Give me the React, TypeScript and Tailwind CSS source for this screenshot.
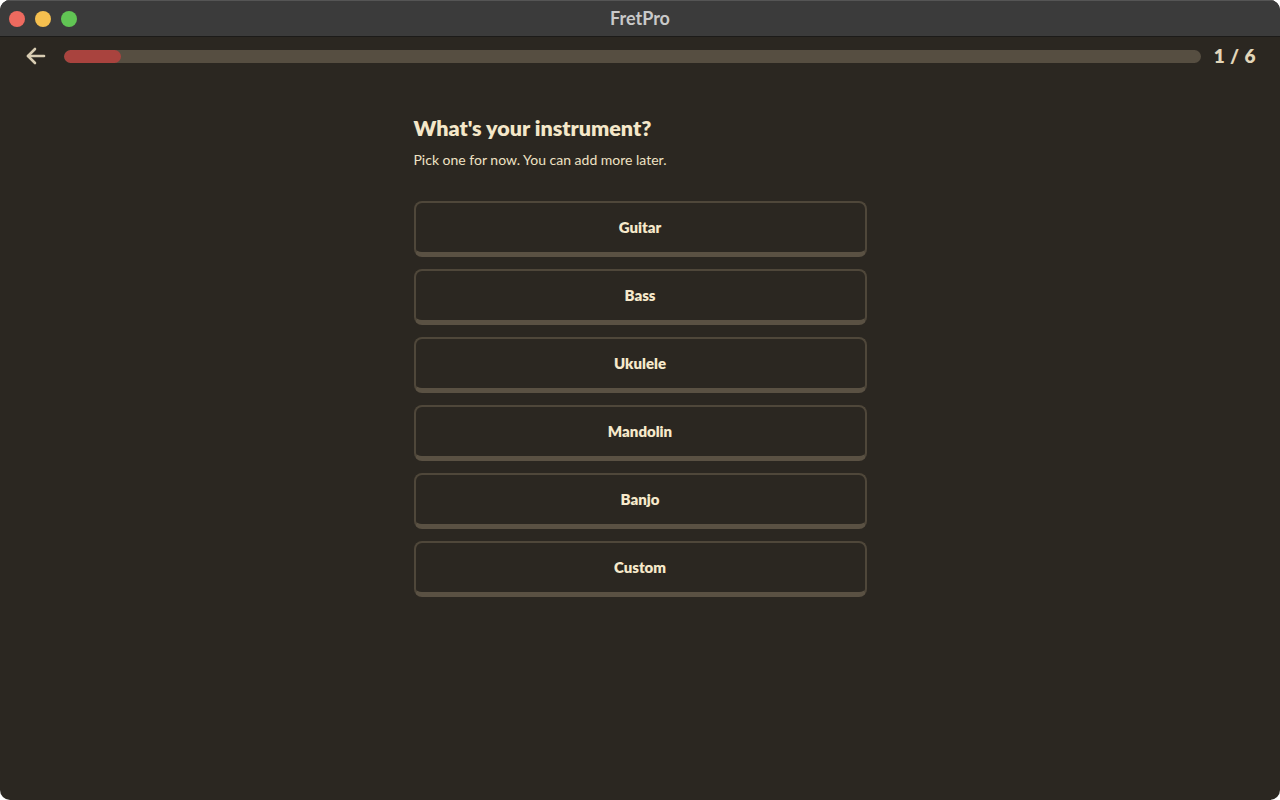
const options = ['Guitar', 'Bass', 'Ukulele', 'Mandolin', 'Banjo', 'Custom'];

const App = () => {
  return (
    <div className="w-[1280px] h-[800px] bg-white" style={{ fontFamily: 'Lato, "Noto Sans", sans-serif' }}>
      <div className="w-full h-full rounded-[10px] overflow-hidden flex flex-col bg-[#2b2721]">
        {/* title bar */}
        <div className="h-[37px] bg-[#3b3b3b] border-t border-t-[#555] border-b border-[#1c1b19] flex items-center relative shrink-0">
          <div className="flex items-center gap-[10px] pl-[9px]">
            <span className="w-[16px] h-[16px] rounded-full bg-[#ee6a5f]" />
            <span className="w-[16px] h-[16px] rounded-full bg-[#f5bf4f]" />
            <span className="w-[16px] h-[16px] rounded-full bg-[#61c554]" />
          </div>
          <div className="absolute inset-0 flex items-center justify-center text-[18px] font-bold text-[#c9c9c9]">
            FretPro
          </div>
        </div>

        {/* progress header */}
        <div className="flex items-center h-[38px] pl-[24px] pr-[24px]">
          <svg width="24" height="24" viewBox="0 0 24 24" fill="none" stroke="#d8ccb2" strokeWidth="2.6" strokeLinecap="round" strokeLinejoin="round">
            <path d="M20 12H4" />
            <path d="M11 5l-7 7 7 7" />
          </svg>
          <div className="flex-1 ml-[16px] mr-[13px] h-[13px] rounded-full bg-[#564e41] overflow-hidden">
            <div className="h-full w-[57px] rounded-full bg-[#a9433e]" />
          </div>
          <div className="text-[19px] font-extrabold text-[#e2d6b9] tracking-wide whitespace-nowrap">1 / 6</div>
        </div>

        {/* content */}
        <div className="flex justify-center pt-[40px]">
          <div className="w-[453px]">
            <h1 className="text-[21.5px] font-extrabold text-[#f4e7c9] leading-[26px]">What's your instrument?</h1>
            <p className="mt-[10px] text-[14px] text-[#efe2c4] leading-[18px]">Pick one for now. You can add more later.</p>
            <div className="mt-[32px] flex flex-col gap-[12px]">
              {options.map((o) => (
                <button
                  key={o}
                  className="h-[56px] w-full rounded-[8px] border-2 border-b-[5px] border-[#4f473a] border-b-[#5a5143] bg-[#2b2721] text-[15px] font-extrabold text-[#f6e9cb]"
                >
                  {o}
                </button>
              ))}
            </div>
          </div>
        </div>
      </div>
    </div>
  );
};

export default App;
